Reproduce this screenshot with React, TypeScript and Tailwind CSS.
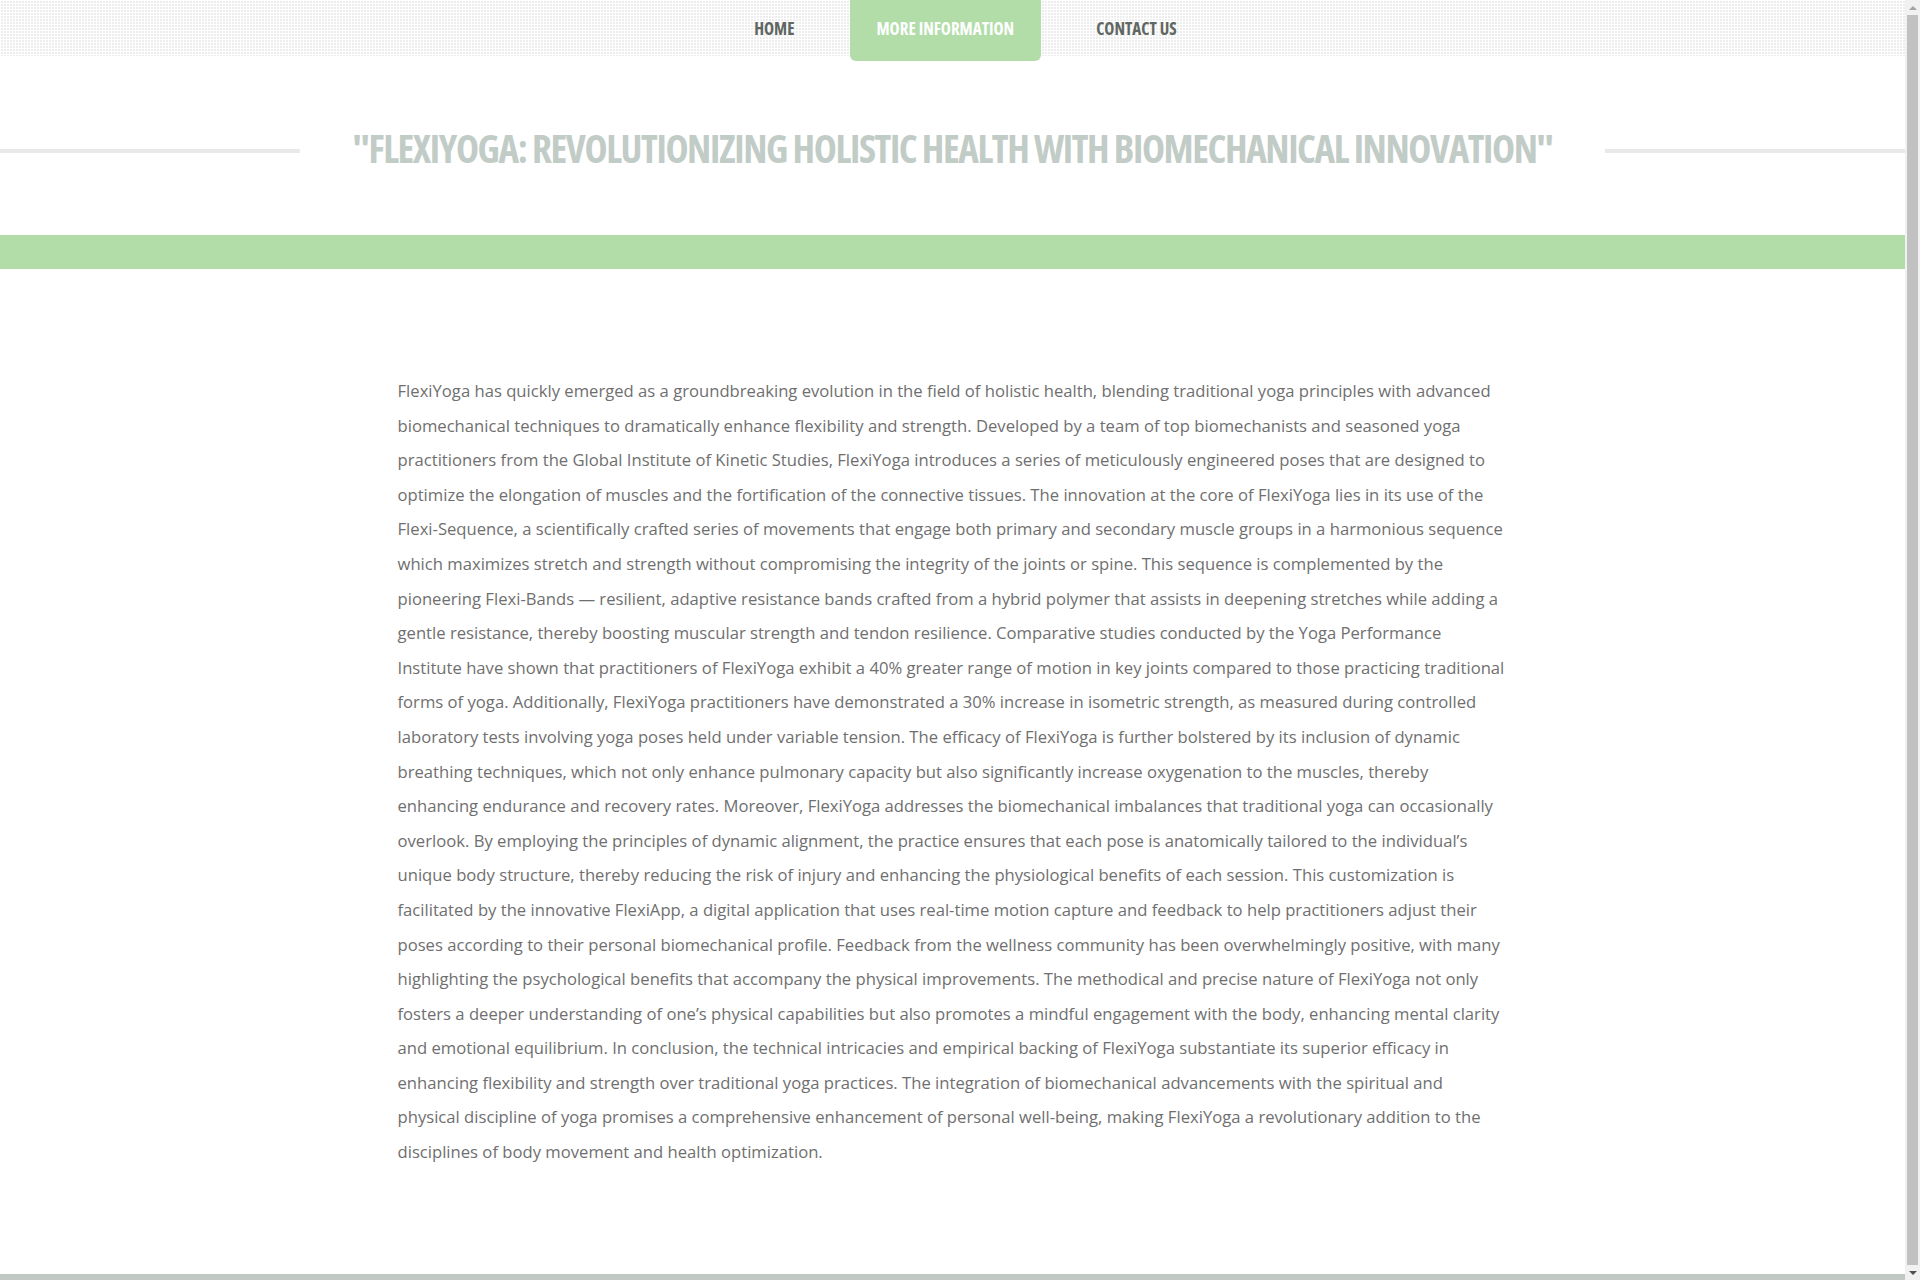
import React from 'react';

const navItems = [
  { label: 'HOME', active: false },
  { label: 'MORE INFORMATION', active: true },
  { label: 'CONTACT US', active: false },
];

const body =
  "FlexiYoga has quickly emerged as a groundbreaking evolution in the field of holistic health, blending traditional yoga principles with advanced biomechanical techniques to dramatically enhance flexibility and strength. Developed by a team of top biomechanists and seasoned yoga practitioners from the Global Institute of Kinetic Studies, FlexiYoga introduces a series of meticulously engineered poses that are designed to optimize the elongation of muscles and the fortification of the connective tissues. The innovation at the core of FlexiYoga lies in its use of the Flexi-Sequence, a scientifically crafted series of movements that engage both primary and secondary muscle groups in a harmonious sequence which maximizes stretch and strength without compromising the integrity of the joints or spine. This sequence is complemented by the pioneering Flexi-Bands \u2014 resilient, adaptive resistance bands crafted from a hybrid polymer that assists in deepening stretches while adding a gentle resistance, thereby boosting muscular strength and tendon resilience. Comparative studies conducted by the Yoga Performance Institute have shown that practitioners of FlexiYoga exhibit a 40% greater range of motion in key joints compared to those practicing traditional forms of yoga. Additionally, FlexiYoga practitioners have demonstrated a 30% increase in isometric strength, as measured during controlled laboratory tests involving yoga poses held under variable tension. The efficacy of FlexiYoga is further bolstered by its inclusion of dynamic breathing techniques, which not only enhance pulmonary capacity but also significantly increase oxygenation to the muscles, thereby enhancing endurance and recovery rates. Moreover, FlexiYoga addresses the biomechanical imbalances that traditional yoga can occasionally overlook. By employing the principles of dynamic alignment, the practice ensures that each pose is anatomically tailored to the individual\u2019s unique body structure, thereby reducing the risk of injury and enhancing the physiological benefits of each session. This customization is facilitated by the innovative FlexiApp, a digital application that uses real-time motion capture and feedback to help practitioners adjust their poses according to their personal biomechanical profile. Feedback from the wellness community has been overwhelmingly positive, with many highlighting the psychological benefits that accompany the physical improvements. The methodical and precise nature of FlexiYoga not only fosters a deeper understanding of one\u2019s physical capabilities but also promotes a mindful engagement with the body, enhancing mental clarity and emotional equilibrium. In conclusion, the technical intricacies and empirical backing of FlexiYoga substantiate its superior efficacy in enhancing flexibility and strength over traditional yoga practices. The integration of biomechanical advancements with the spiritual and physical discipline of yoga promises a comprehensive enhancement of personal well-being, making FlexiYoga a revolutionary addition to the disciplines of body movement and health optimization.";

// window scrollbar as it shows in the screenshot
const Scrollbar = () => (
  <div className="flex h-screen w-[15px] shrink-0 flex-col bg-[#f1f1f1]">
    <div className="flex h-[15px] items-center justify-center">
      <div className="h-0 w-0 border-x-[4px] border-b-[4px] border-x-transparent border-b-[#a3a3a3]" />
    </div>
    <div className="mx-[2px] flex-1 bg-[#c1c1c1]" />
    <div className="flex h-[15px] items-center justify-center">
      <div className="h-0 w-0 border-x-[4px] border-t-[4px] border-x-transparent border-t-[#505050]" />
    </div>
  </div>
);

const App = () => {
  return (
    <div className="flex h-screen overflow-hidden bg-white font-['Open_Sans',sans-serif]">
      <div className="min-w-0 flex-1">
        {/* top nav with dotted grid background */}
        <header className="relative z-10 h-[56px] bg-[#ededed] bg-[image:linear-gradient(90deg,#ffffff_1px,transparent_1px),linear-gradient(#ffffff_1px,transparent_1px)] bg-[size:3px_3px]">
          <nav className="flex h-full justify-center pl-[26px]">
            <ul className="flex gap-[28px]">
              {navItems.map((item) => (
                <li key={item.label}>
                  <a
                    href="#"
                    className={
                      item.active
                        ? 'flex h-[61px] items-start rounded-b-[6px] bg-[#b2dda9] px-[27px] pt-[17px] text-[17px] leading-[24px] font-bold text-white [font-stretch:75%]'
                        : 'flex h-[56px] items-start px-[27px] pt-[17px] text-[17px] leading-[24px] font-bold text-[#5f6763] [font-stretch:75%]'
                    }
                  >
                    {item.label}
                  </a>
                </li>
              ))}
            </ul>
          </nav>
        </header>

        {/* page title */}
        <section className="flex h-[179px] items-center pt-[4px]">
          <div className="mt-[7px] h-[4px] flex-1 bg-[#e8eaea]" />
          <h1 className="px-[53px] text-[39px] font-bold leading-none tracking-[-1.4px] text-[#c2ccc7] [font-stretch:75%]">
            "FLEXIYOGA: REVOLUTIONIZING HOLISTIC HEALTH WITH BIOMECHANICAL INNOVATION"
          </h1>
          <div className="mt-[7px] h-[4px] flex-1 bg-[#e8eaea]" />
        </section>

        <div className="h-[34px] bg-[#b2dda9]" />

        {/* article */}
        <main className="mx-auto w-[1110px] pt-[105px] pb-[104px]">
          <p className="text-[16.65px] leading-[34.6px] text-[#6f6f6f]">{body}</p>
        </main>

        <footer className="h-[20px] bg-[#c1c9c5]" />
      </div>
      <Scrollbar />
    </div>
  );
};

export default App;
